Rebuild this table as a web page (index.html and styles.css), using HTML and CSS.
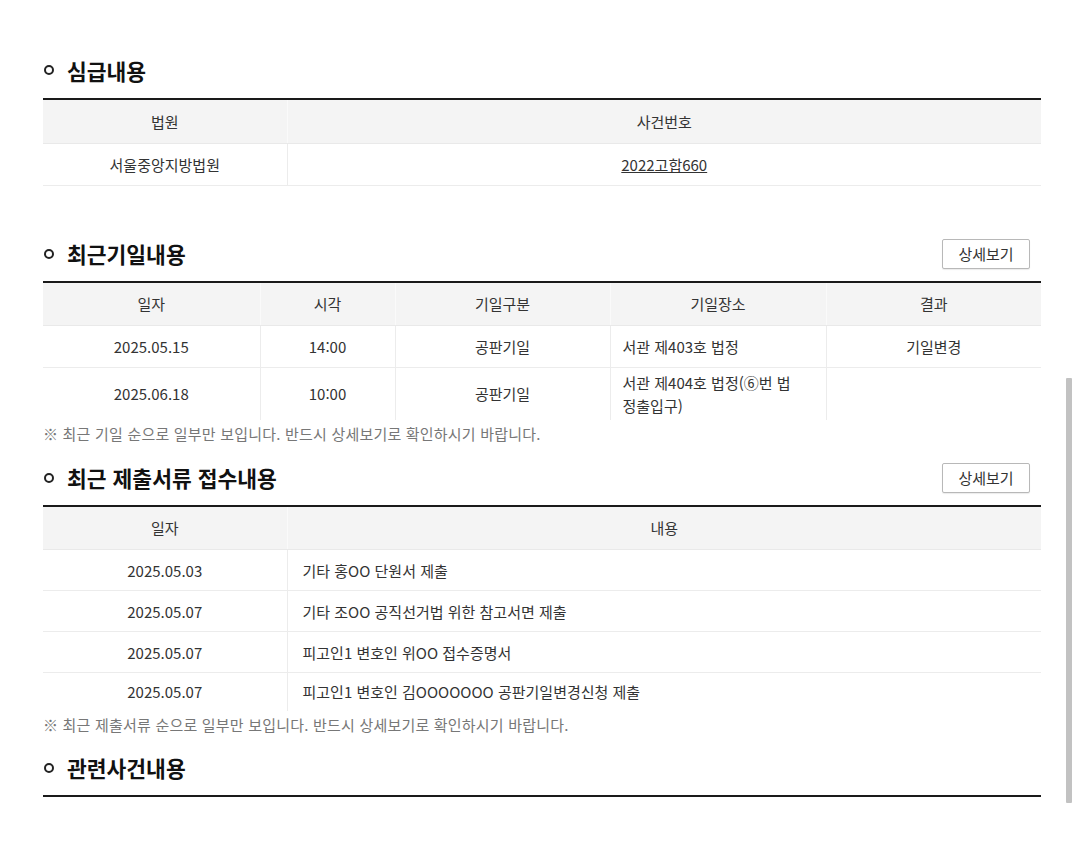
FILE: index.html
```html
<!DOCTYPE html>
<html lang="ko">
<head>
<meta charset="utf-8">
<link rel="stylesheet" href="styles.css">
</head>
<body>
<div class="page">
  <section class="sec sec-first">
    <div class="sec-head"><h2 class="title"><span class="ring"></span>심급내용</h2></div>
    <table class="tbl">
      <colgroup><col style="width:244px"><col></colgroup>
      <thead><tr><th>법원</th><th>사건번호</th></tr></thead>
      <tbody><tr><td>서울중앙지방법원</td><td><a class="case">2022고합660</a></td></tr></tbody>
    </table>
  </section>

  <section class="sec sec-2">
    <div class="sec-head"><h2 class="title"><span class="ring"></span>최근기일내용</h2><button class="btn">상세보기</button></div>
    <table class="tbl">
      <colgroup><col style="width:217px"><col style="width:135px"><col style="width:215px"><col style="width:216px"><col></colgroup>
      <thead><tr><th>일자</th><th>시각</th><th>기일구분</th><th>기일장소</th><th>결과</th></tr></thead>
      <tbody>
        <tr><td>2025.05.15</td><td>14:00</td><td>공판기일</td><td class="left">서관 제403호 법정</td><td>기일변경</td></tr>
        <tr class="tall"><td>2025.06.18</td><td>10:00</td><td>공판기일</td><td class="left">서관 제404호 법정(⑥번 법<br>정출입구)</td><td></td></tr>
      </tbody>
    </table>
    <p class="note">※ 최근 기일 순으로 일부만 보입니다. 반드시 상세보기로 확인하시기 바랍니다.</p>
  </section>

  <section class="sec sec-3">
    <div class="sec-head"><h2 class="title"><span class="ring"></span>최근 제출서류 접수내용</h2><button class="btn">상세보기</button></div>
    <table class="tbl tbl-docs">
      <colgroup><col style="width:244px"><col></colgroup>
      <thead><tr><th>일자</th><th>내용</th></tr></thead>
      <tbody>
        <tr><td>2025.05.03</td><td class="left2">기타 홍OO 단원서 제출</td></tr>
        <tr><td>2025.05.07</td><td class="left2">기타 조OO 공직선거법 위한 참고서면 제출</td></tr>
        <tr><td>2025.05.07</td><td class="left2">피고인1 변호인 위OO 접수증명서</td></tr>
        <tr class="last"><td>2025.05.07</td><td class="left2">피고인1 변호인 김OOOOOOO 공판기일변경신청 제출</td></tr>
      </tbody>
    </table>
    <p class="note note-last">※ 최근 제출서류 순으로 일부만 보입니다. 반드시 상세보기로 확인하시기 바랍니다.</p>
  </section>

  <section class="sec sec-4">
    <div class="sec-head"><h2 class="title"><span class="ring"></span>관련사건내용</h2></div>
    <div class="rule"></div>
  </section>
</div>
<div class="scrollbar"></div>
</body>
</html>
```

FILE: styles.css
```css
* { box-sizing: border-box; }
html, body { margin: 0; padding: 0; background: #fff; }
body {
  font-family: "Noto Sans CJK KR", "Noto Sans", sans-serif;
  color: #333;
  font-size: 15px;
  width: 1080px;
  height: 851px;
  overflow: hidden;
  position: relative;
}
.page {
  padding: 55px 39px 0 43px;
  width: 1080px;
}
.sec-head {
  height: 30px;
  display: flex;
  align-items: center;
  justify-content: space-between;
  margin-bottom: 12px;
}
.sec-first .sec-head { margin-bottom: 13px; }
.title {
  margin: 0;
  font-size: 21.5px;
  font-weight: 700;
  color: #111;
  display: flex;
  align-items: center;
}
.ring {
  width: 10px;
  height: 10px;
  border: 2px solid #222;
  border-radius: 50%;
  margin: 0 13px 0 1px;
  display: inline-block;
}
.btn {
  width: 88px;
  height: 30px;
  border: 1px solid #b8b8b8;
  border-radius: 2px;
  background: #fff;
  box-shadow: 0 1px 1px rgba(0,0,0,0.08);
  font-family: inherit;
  font-size: 15px;
  color: #333;
  margin-right: 11px;
  padding: 0;
}
.tbl {
  width: 998px;
  border-collapse: collapse;
  table-layout: fixed;
  border-top: 2px solid #1a1a1a;
}
.tbl th {
  background: #f4f4f4;
  height: 44px;
  font-weight: 400;
  color: #333;
  border-left: 1px solid #fafafa;
  border-bottom: 1px solid #e9e9e9;
  text-align: center;
  padding: 0;
}
.tbl td {
  height: 42px;
  text-align: center;
  border-left: 1px solid #ececec;
  border-bottom: 1px solid #ececec;
  padding: 0;
  color: #333;
  line-height: 23px;
}
.tbl-docs td { height: 41px; }
.tbl th:first-child, .tbl td:first-child { border-left: none; }
.tbl tr.tall td { height: 52px; border-bottom: none; }
.tbl tr.last td { height: 38px; border-bottom: none; }
.tbl td.left { text-align: left; padding-left: 12px; }
.tbl td.left2 { text-align: left; padding-left: 15px; }
.case { color: #333; text-decoration: underline; }
.sec-2 { margin-top: 53px; }
.note {
  margin: 4px 0 19px;
  font-size: 15px;
  color: #777;
  line-height: 20px;
  letter-spacing: 0.2px;
}
.note-last { margin-bottom: 18px; }
.rule {
  width: 998px;
  border-top: 2px solid #1a1a1a;
}
.scrollbar {
  position: absolute;
  left: 1066px;
  top: 378px;
  width: 6px;
  height: 425px;
  background: #c2c2c2;
  border-radius: 1px;
}
```
